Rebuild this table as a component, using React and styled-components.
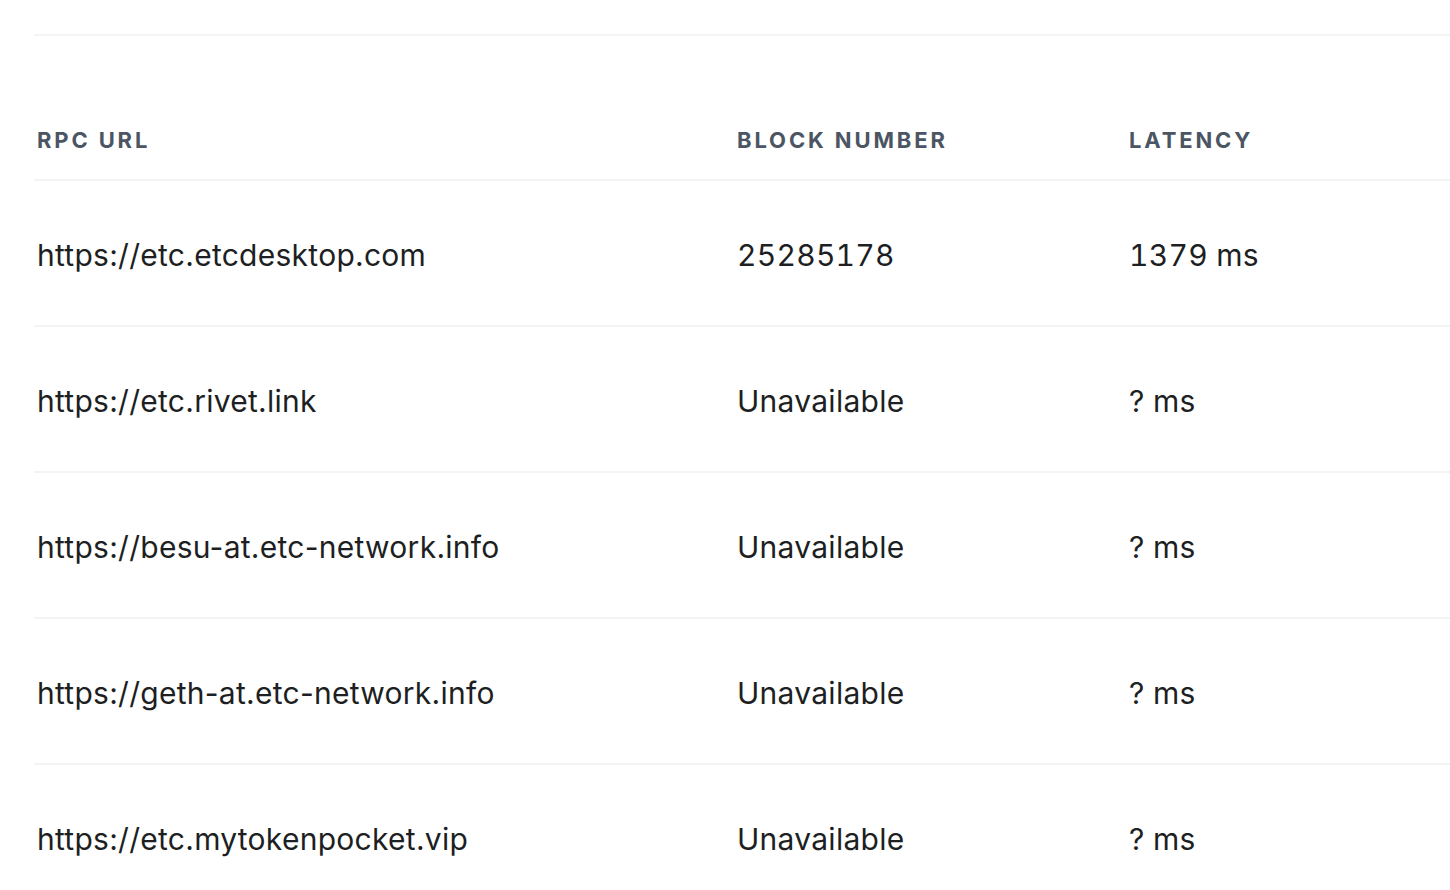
import React from "react";
import styled, { createGlobalStyle } from "styled-components";

const Global = createGlobalStyle`
  html, body { margin: 0; padding: 0; background: #ffffff; }
  body { font-family: Inter, "Noto Sans", "Liberation Sans", sans-serif; -webkit-font-smoothing: antialiased; }
`;

const Page = styled.div`
  padding: 34px 0 0 34px;
  overflow: hidden;
  width: 1450px;
  box-sizing: border-box;
`;

const TopRule = styled.div`
  height: 2px;
  background: #f3f4f6;
  margin-bottom: 74px;
`;

const Table = styled.div`
  width: 1500px;
`;

const Row = styled.div`
  display: grid;
  grid-template-columns: 700px 392px 1fr;
  align-items: center;
  height: ${(p) => (p.$head ? "71px" : "146px")};
  border-bottom: 2px solid #f3f4f6;
  box-sizing: border-box;
`;

const HeadCell = styled.div`
  padding-left: 3px;
  font-size: 22px;
  font-weight: 700;
  letter-spacing: 0.13em;
  text-transform: uppercase;
  color: #4b5563;
  padding-bottom: 10px;
`;

const Cell = styled.div`
  padding-left: 3px;
  padding-top: 4px;
  font-size: 30px;
  font-weight: 400;
  letter-spacing: 0.27px;
  font-variant-numeric: ${(p) => (p.$num ? "tabular-nums" : "normal")};
  color: #1d1f23;
`;

const rows = [
  ["https://etc.etcdesktop.com", "25285178", "1379 ms"],
  ["https://etc.rivet.link", "Unavailable", "? ms"],
  ["https://besu-at.etc-network.info", "Unavailable", "? ms"],
  ["https://geth-at.etc-network.info", "Unavailable", "? ms"],
  ["https://etc.mytokenpocket.vip", "Unavailable", "? ms"],
];

export default function App() {
  return (
    <>
      <Global />
      <Page>
        <TopRule />
        <Table>
          <Row $head>
            <HeadCell>RPC URL</HeadCell>
            <HeadCell>Block Number</HeadCell>
            <HeadCell>Latency</HeadCell>
          </Row>
          {rows.map((r) => (
            <Row key={r[0]}>
              <Cell>{r[0]}</Cell>
              <Cell $num>{r[1]}</Cell>
              <Cell $num>{r[2]}</Cell>
            </Row>
          ))}
        </Table>
      </Page>
    </>
  );
}
